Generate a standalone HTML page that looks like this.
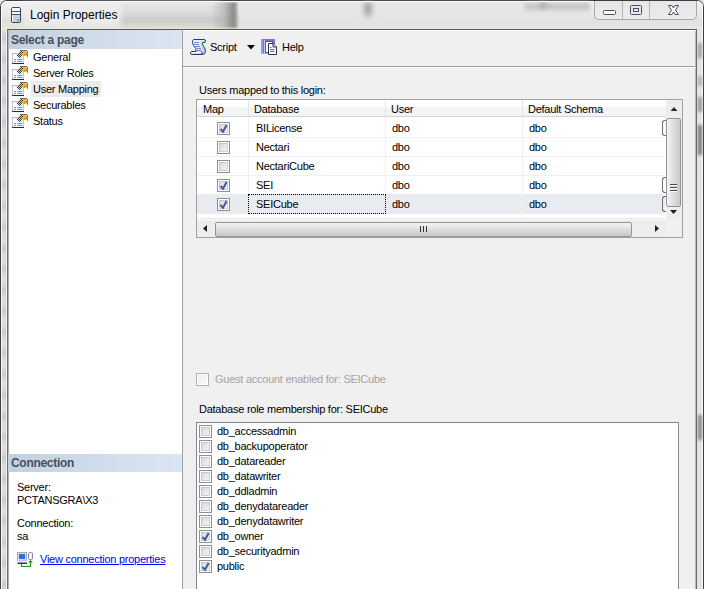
<!DOCTYPE html>
<html><head><meta charset="utf-8">
<style>
*{box-sizing:border-box;margin:0;padding:0}
html,body{width:704px;height:589px;overflow:hidden}
body{position:relative;background:#e6e6e6;font-family:"Liberation Sans",sans-serif;font-size:11px;color:#000;letter-spacing:-0.25px}
.a{position:absolute}
.t{position:absolute;white-space:nowrap;line-height:13px}
.cb{position:absolute;width:13px;height:13px;border:1px solid #8e8f8f;background:linear-gradient(135deg,#cdd1d8,#e6e8eb 50%,#f7f7f7);box-shadow:inset 0 0 0 1px #fff,inset 0 0 0 2px rgba(175,180,190,0.55)}
.cb svg{position:absolute;left:-1px;top:-1px}
.hl{position:absolute;height:1px}
.vl{position:absolute;width:1px}
</style></head><body>

<!-- window frame -->
<div class="a" style="left:0;top:0;width:704px;height:589px;border:1px solid #3c3c3c;border-bottom:none;border-radius:7px 7px 0 0;background:linear-gradient(#ececec,#e4e4e4 30px,#e2e2e2)"></div>
<div class="a" style="left:1px;top:1px;width:702px;height:28px;border-radius:6px 6px 0 0;background:linear-gradient(#f2f2f2,#ebebeb 11px,#e0e1e2 19px,#e4e4e2 24px,#e8e8e6 28px)"></div>
<div class="a" style="left:1px;top:18px;width:240px;height:11px;background:linear-gradient(#dcdee0,#e2e2d8 6px,#e8e8da);"></div>
<div class="a" style="left:120px;top:2px;width:100px;height:26px;background:linear-gradient(#e6e6e6,#dedede 10px,#c8c9ca 19px,#dcdccc 25px,#e4e4d8);filter:blur(2px)"></div>
<div class="a" style="left:24px;top:4px;width:96px;height:22px;background:#ececec;filter:blur(3px)"></div>
<div class="a" style="left:240px;top:2px;width:350px;height:26px;background:linear-gradient(#e8e8e8,#e6e6e6 15px,#e2e2e2 22px,#e8e8e2);filter:blur(1px)"></div>
<div class="a" style="left:212px;top:2px;width:26px;height:26px;background:linear-gradient(90deg,rgba(140,140,140,0),rgba(140,140,140,0.5) 50%,rgba(120,120,120,0.85) 85%,rgba(150,150,150,0.4));filter:blur(1px)"></div>
<div class="a" style="left:364px;top:2px;width:8px;height:14px;background:#a8a8a8;filter:blur(2.5px)"></div>
<div class="a" style="left:525px;top:3px;width:65px;height:7px;background:#c4c4c4;filter:blur(2px)"></div>
<div class="a" style="left:540px;top:2px;width:6px;height:6px;background:#a8b0c8;filter:blur(2px)"></div>
<div class="a" style="left:1px;top:1px;width:702px;height:588px;border:1px solid #fafafa;border-bottom:none;border-radius:6px 6px 0 0"></div>

<!-- title -->
<svg class="a" width="12" height="18" style="left:10px;top:6px">
 <rect x="1.5" y="1.5" width="9" height="15" rx="1.5" fill="#c6cfee" stroke="#3a4462"/>
 <rect x="2" y="2" width="8" height="3" fill="#f4f6fc"/>
 <rect x="2" y="5" width="8" height="1" fill="#4a5470"/>
 <rect x="2" y="6" width="8" height="2" fill="#f4f6fc"/>
 <rect x="2" y="8" width="8" height="1" fill="#4a5470"/>
 <rect x="2" y="9" width="1" height="7" fill="#ffffff"/>
 <rect x="7" y="13" width="2" height="2" fill="#40d040"/>
</svg>
<div class="t" style="left:30px;top:8px;font-size:12px;letter-spacing:0;line-height:14px">Login Properties</div>

<!-- frame streaks -->
<div class="a" style="left:698px;top:43px;width:4px;height:15px;background:#a0a0a0;filter:blur(1.5px)"></div>
<div class="a" style="left:698px;top:76px;width:4px;height:10px;background:#b0b0b0;filter:blur(1.5px)"></div>
<div class="a" style="left:698px;top:97px;width:4px;height:15px;background:#989898;filter:blur(1.5px)"></div>
<div class="a" style="left:698px;top:125px;width:4px;height:30px;background:#787878;filter:blur(1.5px)"></div>
<div class="a" style="left:698px;top:415px;width:4px;height:25px;background:#888888;filter:blur(1.5px)"></div>
<div class="a" style="left:2px;top:30px;width:4px;height:559px;background:repeating-linear-gradient(#dedede 0,#cacaca 8px,#dedede 16px,#dcdcdc 21px);filter:blur(0.6px)"></div>
<div class="vl" style="left:6px;top:30px;height:559px;background:#f2f2f2"></div>
<div class="hl" style="left:8px;top:588px;width:174px;background:#c8d4e0"></div>
<!-- caption buttons -->
<div class="a" style="left:594px;top:1px;width:103px;height:19px;border:1px solid #a9a9a9;border-top:none;border-radius:0 0 5px 5px;background:linear-gradient(#e6e6e6,#ececec)"></div>
<div class="vl" style="left:622px;top:1px;height:18px;background:#b5b5b5"></div>
<div class="vl" style="left:649px;top:1px;height:18px;background:#b5b5b5"></div>
<svg class="a" style="left:594px;top:0" width="103" height="20">
 <rect x="9.5" y="10.5" width="12" height="4" rx="1" fill="#fff" stroke="#4b4f66"/>
 <rect x="36.5" y="5.5" width="11" height="9" rx="1" fill="none" stroke="#4b4f66"/>
 <rect x="39.5" y="8.5" width="5" height="3" fill="none" stroke="#4b4f66"/>
 <path d="M74.5,5.5 L78,5.5 L79.5,8 L81,5.5 L84.5,5.5 L81.5,10 L84.5,14.5 L81,14.5 L79.5,12 L78,14.5 L74.5,14.5 L77.5,10 Z" fill="#fff" stroke="#4b4f66"/>
</svg>

<!-- left panel -->
<div class="a" style="left:7px;top:29px;width:176px;height:560px;background:#fff;border-left:1px solid #6f6f6f;border-top:1px solid #5a5a5a;border-right:1px solid #a0a0a0"></div>
<div class="a" style="left:8px;top:30px;width:174px;height:19px;background:linear-gradient(90deg,#c3d1df,#dbe6f2)"></div>
<div class="vl" style="left:8px;top:30px;height:559px;background:#aeb2ba"></div>
<div class="t" style="left:11px;top:33px;font-weight:bold;font-size:12px;line-height:14px;color:#46505c;letter-spacing:-0.3px">Select a page</div>

<div class="a" style="left:31px;top:81px;width:70px;height:16px;background:#ebebeb"></div>
<svg class="a" width="17" height="80" style="left:11px;top:49px">
 <defs><g id="pi">
  <rect x="1.5" y="4.5" width="11" height="10" fill="#fff" stroke="#c4c4cc"/>
  <rect x="9" y="9" width="3" height="5" fill="#dfeefa"/>
  <line x1="1" y1="4.5" x2="9" y2="4.5" stroke="#b0b0f4"/>
  <line x1="1" y1="14.5" x2="13" y2="14.5" stroke="#2a2a2a"/>
  <rect x="3" y="10" width="2" height="1" fill="#8888d8"/><rect x="6" y="10" width="5" height="1" fill="#8888d8"/>
  <rect x="3" y="12" width="2" height="1" fill="#8888d8"/><rect x="6" y="12" width="5" height="1" fill="#8888d8"/>
  <path d="M10,1.5 L15,1.5 Q16.5,3 16,5 Q15,7 12,6.8 L10.5,6 Z" fill="#f6b818"/>
  <path d="M13,5 Q15,5.5 16,4 L16,6 Q15,7 12.5,6.8 Z" fill="#e08a10"/>
  <rect x="9" y="1" width="7" height="1" fill="#707060"/>
  <rect x="9" y="2" width="1" height="1" fill="#f4c830"/><rect x="10" y="2" width="1" height="1" fill="#3c3c48"/><rect x="11" y="2" width="1" height="1" fill="#f4c830"/><rect x="8" y="3" width="1" height="1" fill="#f4c830"/><rect x="9" y="3" width="1" height="1" fill="#3c3c48"/><rect x="10" y="3" width="1" height="1" fill="#f4c830"/><rect x="11" y="3" width="1" height="1" fill="#3c3c48"/><rect x="7" y="4" width="1" height="1" fill="#f4c830"/><rect x="8" y="4" width="1" height="1" fill="#3c3c48"/><rect x="9" y="4" width="1" height="1" fill="#f4c830"/><rect x="10" y="4" width="1" height="1" fill="#3c3c48"/><rect x="11" y="4" width="1" height="1" fill="#f4c830"/><rect x="6" y="5" width="1" height="1" fill="#f4c830"/><rect x="7" y="5" width="1" height="1" fill="#3c3c48"/><rect x="8" y="5" width="1" height="1" fill="#f4c830"/><rect x="9" y="5" width="1" height="1" fill="#3c3c48"/><rect x="10" y="5" width="1" height="1" fill="#f4c830"/><rect x="6" y="6" width="1" height="1" fill="#3c3c48"/><rect x="7" y="6" width="1" height="1" fill="#f4c830"/><rect x="8" y="6" width="1" height="1" fill="#3c3c48"/><rect x="9" y="6" width="1" height="1" fill="#f4c830"/><rect x="10" y="6" width="1" height="1" fill="#3c3c48"/><rect x="7" y="7" width="1" height="1" fill="#3c3c48"/><rect x="8" y="7" width="1" height="1" fill="#f4c830"/><rect x="9" y="7" width="1" height="1" fill="#3c3c48"/><rect x="8" y="8" width="1" height="1" fill="#3c3c48"/>
  <rect x="16" y="2" width="1" height="6" fill="#30a030"/>
 </g></defs>
 <use href="#pi" y="0"/><use href="#pi" y="16"/><use href="#pi" y="32"/><use href="#pi" y="48"/><use href="#pi" y="64"/>
</svg>
<div class="t" style="left:33px;top:51px">General</div>
<div class="t" style="left:33px;top:67px">Server Roles</div>
<div class="t" style="left:33px;top:83px">User Mapping</div>
<div class="t" style="left:33px;top:99px">Securables</div>
<div class="t" style="left:33px;top:115px">Status</div>

<!-- connection -->
<div class="a" style="left:8px;top:454px;width:174px;height:18px;background:linear-gradient(90deg,#c3d1df,#dbe6f2)"></div>
<div class="t" style="left:11px;top:456px;font-weight:bold;font-size:12px;line-height:14px;color:#46505c;letter-spacing:-0.3px">Connection</div>
<div class="t" style="left:17px;top:481px">Server:</div>
<div class="t" style="left:17px;top:494px">PCTANSGRA\X3</div>
<div class="t" style="left:17px;top:517px">Connection:</div>
<div class="t" style="left:17px;top:530px">sa</div>
<svg class="a" width="24" height="22" style="left:14px;top:548px">
 <rect x="3.5" y="4.5" width="9" height="8" fill="#d8dce8" stroke="#a8a8b0"/>
 <rect x="5" y="6" width="6" height="5" fill="#2a6ef0"/>
 <rect x="3" y="12.5" width="10" height="3" fill="#e8ecf4"/>
 <rect x="3.5" y="14.5" width="9.5" height="1.5" fill="#303880"/>
 <rect x="14.5" y="4.5" width="4" height="7" rx="1" fill="#f4f4f8" stroke="#8a8a98"/>
 <path d="M7.5,16 V18.5 H16.5 V13" fill="none" stroke="#1a9a1a" stroke-width="1.2"/>
 <path d="M14,14.5 L16.5,12 L19,14.5 Z" fill="#1a9a1a"/>
</svg>
<div class="t" style="left:40px;top:553px;color:#0000ff;text-decoration:underline">View connection properties</div>

<!-- right panel -->
<div class="a" style="left:183px;top:29px;width:514px;height:560px;background:#f0f0f0;border-top:1px solid #5a5a5a;border-right:1px solid #6a6a6a"></div>
<div class="vl" style="left:695px;top:30px;height:559px;background:#b4b8c0"></div>
<div class="hl" style="left:183px;top:30px;width:513px;background:#fff"></div>
<div class="hl" style="left:183px;top:66px;width:513px;background:#a0a0a0"></div>
<div class="hl" style="left:183px;top:67px;width:513px;background:#fff"></div>

<!-- toolbar -->
<svg class="a" width="20" height="20" style="left:188px;top:37px">
 <defs><linearGradient id="sg" x1="0" y1="0" x2="1" y2="1"><stop offset="0" stop-color="#ffffff"/><stop offset="1" stop-color="#b8c8ec"/></linearGradient></defs>
 <path d="M5.5,2.5 H16 Q17.5,2.5 17.5,4 Q17.5,5.5 16,5.5 H14.5 Q13.8,5.8 14.2,6.8 L17,12 Q18,14.2 17,16.2 Q16.2,17.5 14,17.5 H3.8 Q2.5,17.5 2.5,16 Q2.5,14.5 3.8,14.5 H8 L7.8,11.5 Q4.8,8.5 4.5,5.5 Q4.5,2.5 5.5,2.5 Z" fill="url(#sg)" stroke="#2e3b58"/>
 <path d="M3.5,15.5 H13" stroke="#ffffff"/>
 <path d="M6,5.5 H11 M6,7.5 H11 M7,9.5 H12 M9,11.5 H13 M9,13.5 H13" stroke="#7090d8"/>
 <path d="M13.5,14.5 Q14.5,16 14,17.5" fill="none" stroke="#2e3b58"/>
</svg>
<div class="t" style="left:210px;top:41px">Script</div>
<svg class="a" width="8" height="5" style="left:247px;top:45px"><path d="M0,0 H8 L4,4.5 Z" fill="#000"/></svg>
<svg class="a" width="20" height="20" style="left:259px;top:37px">
 <rect x="2" y="2" width="14" height="14.5" fill="#7874d0"/>
 <rect x="2" y="2" width="2" height="14.5" fill="#9c9ae0"/>
 <rect x="5" y="3" width="1" height="13" fill="#c8c8f8"/>
 <rect x="6.5" y="4.5" width="7" height="11" fill="#fff" stroke="#5a5a90"/>
 <path d="M9.5,6.5 H14 L17.5,10 V17.5 H9.5 Z" fill="#fff" stroke="#26324e"/>
 <path d="M14,6.5 V10 H17.5" fill="#d8e0f0" stroke="#26324e"/>
 <path d="M11,10.5 H12.5 M11,12.5 H15.5 M11,14.5 H15.5" stroke="#5a6a90"/>
</svg>
<div class="t" style="left:282px;top:41px">Help</div>

<div class="t" style="left:199px;top:84px">Users mapped to this login:</div>

<!-- grid -->
<div class="a" style="left:196px;top:99px;width:487px;height:139px;border:1px solid #a0a0a0;background:#fff"></div>
<div class="a" style="left:197px;top:107px;width:469px;height:9px;background:#f3f4f6"></div>
<div class="hl" style="left:197px;top:116px;width:468px;background:#d5d5d5"></div>
<div class="vl" style="left:248px;top:100px;height:16px;background:#e3e4e6"></div>
<div class="vl" style="left:385px;top:100px;height:16px;background:#e3e4e6"></div>
<div class="vl" style="left:522px;top:100px;height:16px;background:#e3e4e6"></div>
<div class="t" style="left:203px;top:103px">Map</div>
<div class="t" style="left:254px;top:103px">Database</div>
<div class="t" style="left:391px;top:103px">User</div>
<div class="t" style="left:528px;top:103px">Default Schema</div>

<div class="a" style="left:197px;top:194px;width:468px;height:20px;background:#e8ecf0"></div>
<div class="hl" style="left:197px;top:137px;width:468px;background:#f0f0f0"></div>
<div class="hl" style="left:197px;top:156px;width:468px;background:#f0f0f0"></div>
<div class="hl" style="left:197px;top:175px;width:468px;background:#f0f0f0"></div>
<div class="hl" style="left:197px;top:218px;width:468px;background:#e6e6e6"></div>
<div class="vl" style="left:248px;top:117px;height:102px;background:#f0f0f0"></div>
<div class="vl" style="left:385px;top:117px;height:102px;background:#f0f0f0"></div>
<div class="vl" style="left:522px;top:117px;height:102px;background:#f0f0f0"></div>
<div class="a" style="left:248px;top:194px;width:138px;height:20px;border:1px dotted #000"></div>

<div class="cb" style="left:217px;top:122px"><svg width="13" height="13"><polyline points="3.5,7 6,9.8 9.6,3" fill="none" stroke="#3b5aa3" stroke-width="2"/></svg></div>
<div class="cb" style="left:217px;top:141px"></div>
<div class="cb" style="left:217px;top:160px"></div>
<div class="cb" style="left:217px;top:179px"><svg width="13" height="13"><polyline points="3.5,7 6,9.8 9.6,3" fill="none" stroke="#3b5aa3" stroke-width="2"/></svg></div>
<div class="cb" style="left:217px;top:198px"><svg width="13" height="13"><polyline points="3.5,7 6,9.8 9.6,3" fill="none" stroke="#3b5aa3" stroke-width="2"/></svg></div>

<div class="t" style="left:256px;top:122px">BILicense</div>
<div class="t" style="left:256px;top:141px">Nectari</div>
<div class="t" style="left:256px;top:160px">NectariCube</div>
<div class="t" style="left:256px;top:179px">SEI</div>
<div class="t" style="left:256px;top:198px">SEICube</div>
<div class="t" style="left:392px;top:122px">dbo</div>
<div class="t" style="left:392px;top:141px">dbo</div>
<div class="t" style="left:392px;top:160px">dbo</div>
<div class="t" style="left:392px;top:179px">dbo</div>
<div class="t" style="left:392px;top:198px">dbo</div>
<div class="t" style="left:529px;top:122px">dbo</div>
<div class="t" style="left:529px;top:141px">dbo</div>
<div class="t" style="left:529px;top:160px">dbo</div>
<div class="t" style="left:529px;top:179px">dbo</div>
<div class="t" style="left:529px;top:198px">dbo</div>

<!-- partial button brackets -->
<div class="a" style="left:662px;top:120px;width:4px;height:16px;border:1px solid #707070;border-right:none;border-radius:3px 0 0 3px"></div>
<div class="a" style="left:662px;top:177px;width:4px;height:16px;border:1px solid #707070;border-right:none;border-radius:3px 0 0 3px"></div>
<div class="a" style="left:662px;top:196px;width:4px;height:16px;border:1px solid #707070;border-right:none;border-radius:3px 0 0 3px"></div>

<!-- vertical scrollbar -->
<div class="a" style="left:666px;top:100px;width:16px;height:119px;background:#ededed"></div>
<svg class="a" width="17" height="17" style="left:665px;top:100px"><path d="M5.5,11 L9,7 L12.5,11 Z" fill="#2a2a2a"/></svg>
<div class="a" style="left:666px;top:118px;width:15px;height:89px;border:1px solid #959595;border-radius:2px;background:linear-gradient(90deg,#f4f4f4,#e0e0e0 45%,#c8c8c8)"></div>
<div class="hl" style="left:670px;top:184px;width:7px;background:#4a4a4a;box-shadow:0 1px 0 #fafafa"></div>
<div class="hl" style="left:670px;top:187px;width:7px;background:#4a4a4a;box-shadow:0 1px 0 #fafafa"></div>
<div class="hl" style="left:670px;top:190px;width:7px;background:#4a4a4a;box-shadow:0 1px 0 #fafafa"></div>
<svg class="a" width="17" height="12" style="left:665px;top:207px"><path d="M5,3 L12,3 L8.5,7 Z" fill="#1e1e1e"/></svg>
<!-- corner -->
<div class="a" style="left:665px;top:219px;width:17px;height:18px;background:#f0f0f0"></div>
<!-- horizontal scrollbar -->
<div class="hl" style="left:197px;top:219px;width:468px;background:#fafafa"></div><div class="a" style="left:197px;top:220px;width:468px;height:17px;background:#ededed"></div>
<svg class="a" width="17" height="17" style="left:197px;top:220px"><path d="M10,5 L6,8.5 L10,12 Z" fill="#1e1e1e"/></svg>
<div class="a" style="left:215px;top:222px;width:417px;height:15px;border:1px solid #959595;border-radius:2px;background:linear-gradient(#f4f4f4,#e0e0e0 45%,#c8c8c8)"></div>
<div class="vl" style="left:420px;top:226px;height:6px;background:#333"></div>
<div class="vl" style="left:423px;top:226px;height:6px;background:#333"></div>
<div class="vl" style="left:426px;top:226px;height:6px;background:#333"></div>
<svg class="a" width="17" height="17" style="left:648px;top:220px"><path d="M7,5 L11,8.5 L7,12 Z" fill="#1e1e1e"/></svg>

<!-- guest -->
<div class="a" style="left:196px;top:373px;width:13px;height:13px;border:1px solid #b1b1b1;background:linear-gradient(135deg,#ececec,#fbfbfb);box-shadow:inset 0 0 0 1px #fff"></div>
<div class="t" style="left:215px;top:373px;color:#a3a3a3">Guest account enabled for: SEICube</div>

<div class="t" style="left:199px;top:403px">Database role membership for: SEICube</div>

<!-- role list -->
<div class="a" style="left:196px;top:422px;width:483px;height:170px;border:1px solid #828790;background:#fff"></div>
<div class="cb" style="left:199px;top:425px"></div>
<div class="cb" style="left:199px;top:440px"></div>
<div class="cb" style="left:199px;top:455px"></div>
<div class="cb" style="left:199px;top:470px"></div>
<div class="cb" style="left:199px;top:485px"></div>
<div class="cb" style="left:199px;top:500px"></div>
<div class="cb" style="left:199px;top:515px"></div>
<div class="cb" style="left:199px;top:530px"><svg width="13" height="13"><polyline points="3.5,7 6,9.8 9.6,3" fill="none" stroke="#3b5aa3" stroke-width="2"/></svg></div>
<div class="cb" style="left:199px;top:545px"></div>
<div class="cb" style="left:199px;top:560px"><svg width="13" height="13"><polyline points="3.5,7 6,9.8 9.6,3" fill="none" stroke="#3b5aa3" stroke-width="2"/></svg></div>
<div class="t" style="left:217px;top:425px">db_accessadmin</div>
<div class="t" style="left:217px;top:440px">db_backupoperator</div>
<div class="t" style="left:217px;top:455px">db_datareader</div>
<div class="t" style="left:217px;top:470px">db_datawriter</div>
<div class="t" style="left:217px;top:485px">db_ddladmin</div>
<div class="t" style="left:217px;top:500px">db_denydatareader</div>
<div class="t" style="left:217px;top:515px">db_denydatawriter</div>
<div class="t" style="left:217px;top:530px">db_owner</div>
<div class="t" style="left:217px;top:545px">db_securityadmin</div>
<div class="t" style="left:217px;top:560px">public</div>

</body></html>
